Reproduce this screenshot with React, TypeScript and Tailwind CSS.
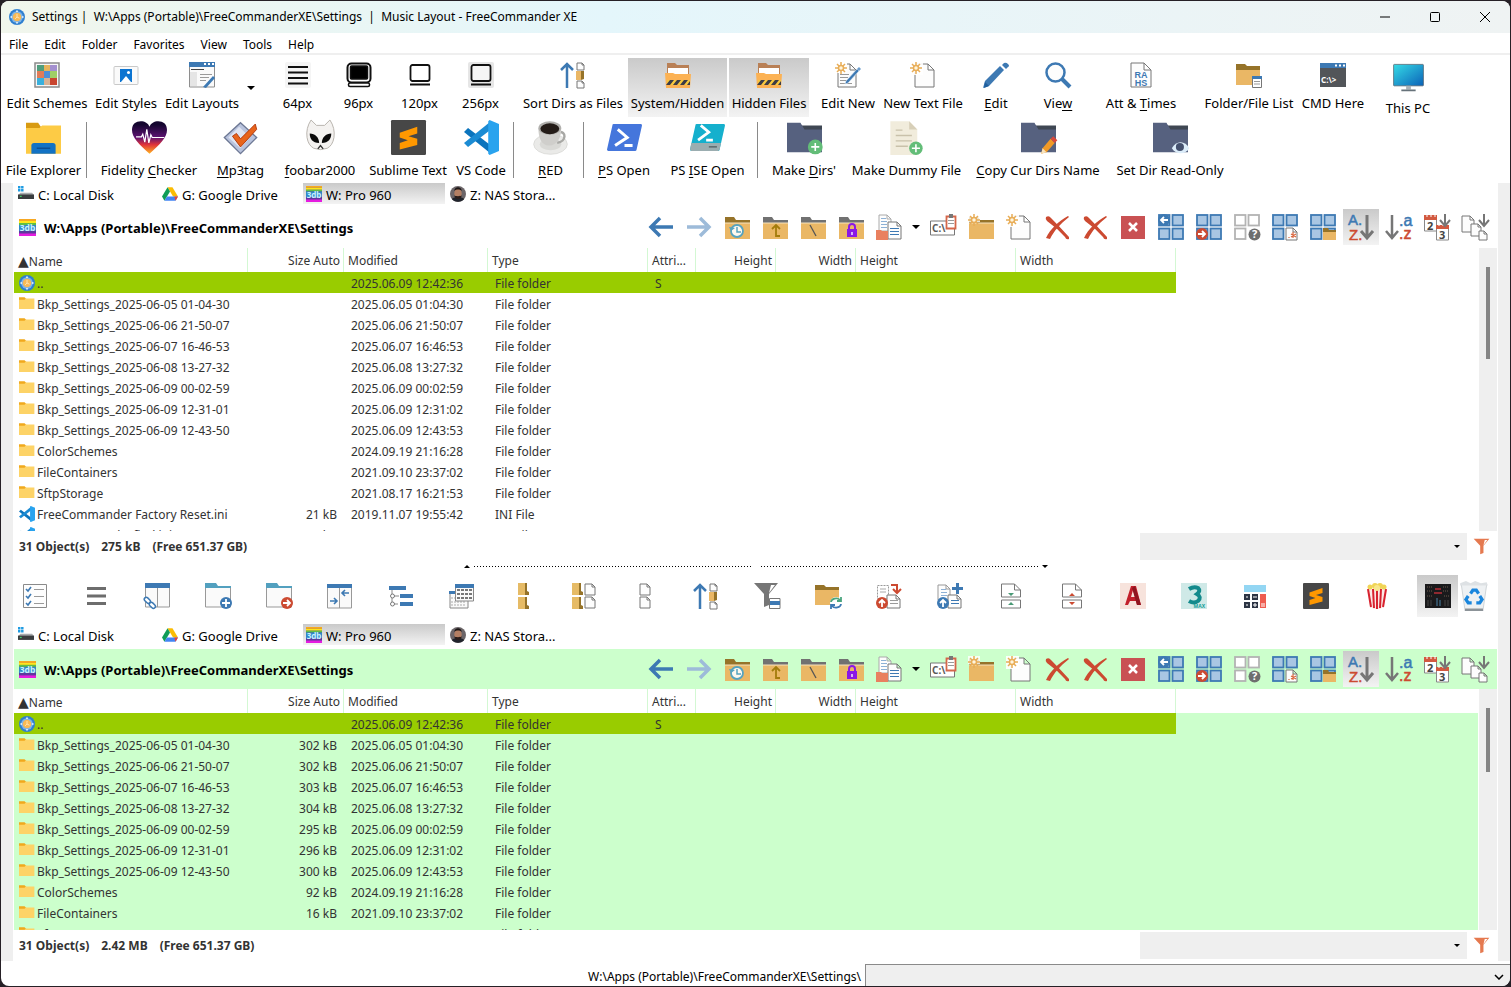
import { ReactNode } from "react";
import clsx from "clsx";

const BLUE = "#3d79b3";
const RED = "#cc4a31";
const GRAY = "#767676";
const SAND = "#eab765";
const BROWN = "#967329";

type BoxProps = { x: number; y: number; w: number; h: number; stroke?: string; fill?: string };

function Page({ x, y, w, h, stroke = GRAY, fill = "#fdfdfd" }: BoxProps) {
  const f = Math.round(w / 3);
  return (
    <path
      d={`M${x} ${y}h${w - f}l${f} ${f}v${h - f}h${-w}zM${x + w - f} ${y}v${f}h${f}`}
      fill={fill}
      stroke={stroke}
    />
  );
}

function Folder({ tab = BROWN, body = SAND }: { tab?: string; body?: string }) {
  return (
    <>
      <path d="M1 3h9l2 3h14v4H1z" fill={tab} />
      <path d="M1 8.500h25V25H1z" fill="#f6e3c0" />
      <path d="M1 9.500h25V25H1z" fill={body} />
    </>
  );
}

function Star({ x = 7, y = 7 }) {
  return (
    <g transform={`translate(${x} ${y})`} stroke="#e8ad57" strokeWidth="1.500">
      <path d="M0-6V-3M0 3V6M-6 0H-3M3 0H6M-4-4L-2-2M2 2L4 4M-4 4L-2 2M2-2L4-4" />
      <circle r="2.500" fill="#fff5dd" />
    </g>
  );
}

function Tiles({ s = BLUE, f = "#a9c6e3", skip = false }) {
  return (
    <g fill={f} stroke={s} strokeWidth="1.800">
      <rect x="1" y="1" width="10.500" height="10.500" />
      <rect x="14.500" y="1" width="10.500" height="10.500" />
      <rect x="1" y="14.500" width="10.500" height="10.500" />
      {!skip && <rect x="14.500" y="14.500" width="10.500" height="10.500" />}
    </g>
  );
}

function Badge({ x, y, color, d }: { x: number; y: number; color: string; d: string }) {
  return (
    <g transform={`translate(${x} ${y})`}>
      <circle r="6" fill={color} />
      <path d={d} stroke="#fff" strokeWidth="1.800" fill="none" />
    </g>
  );
}

const ARROW_R = "M-4 0H3M0-3L3 0L0 3";
const ARROW_L = "M4 0H-3M0-3L-3 0L0 3";
const ARROW_U = "M0 4V-3M-3 0L0-3L3 0";
const PLUS = "M-4 0H4M0-4V4";

function Sublime() {
  return (
    <>
      <rect width="26" height="26" rx="1" fill="#474747" />
      <path d="M6.500 9.500L19.500 5v5L13 12l6.500 2v4.500L6.500 22v-5l6-2-6-2z" fill="#ff9800" />
    </>
  );
}

function VSCode() {
  return (
    <>
      <path d="M0 9l3-3L20 19v6z" fill="#0b74bd" />
      <path d="M0 17l3 3L20 7V1z" fill="#1b8bd3" />
      <path d="M19 0l7 3v20l-7 3-1-1V1z" fill="#29a3ee" />
    </>
  );
}

function HazardFolder() {
  return (
    <>
      <path d="M2 1h8l2 2h12v9H2z" fill="#b98056" />
      <path d="M3 6h20v8H3z" fill="#fff" />
      <path d="M0 11h8l2 1h16l-1 14H1z" fill="#fcb254" />
      <path d="M2 18h23v5H2z" fill="#f7c83c" />
      <path d="M1 23l4-5h4l-4 5zM8 23l4-5h4l-4 5zM15 23l4-5h4l-4 5zM22 23l3-4v4z" fill="#3c3c46" />
    </>
  );
}

function Pencil() {
  return (
    <>
      <path d="M11 19L22 7l2 2-11 12-3 1z" fill={BLUE} stroke="#dceaf6" strokeWidth=".6" />
      <path d="M22 7l2-2 2 2-2 2z" fill="#6b9ccb" />
    </>
  );
}

function SortDirs() {
  return (
    <>
      <path d="M7 26V2M1 8L7 2l6 6" stroke={BLUE} strokeWidth="2.500" fill="none" />
      <Page x={17} y={1} w={7} h={7} />
      <path d="M16 9h5v9h-5z" fill={SAND} />
      <path d="M21 9h3v8l-3 1z" fill={BROWN} />
      <Page x={17} y={19} w={7} h={7} />
    </>
  );
}

function TealFolder() {
  return (
    <>
      <path d="M.5 4.500h25V24H.5z" fill="#fafafa" stroke="#999" />
      <path d="M0 0h11l2 3h13v2H0z" fill="#52a0bf" />
    </>
  );
}

function DarkFolder() {
  return (
    <>
      <path d="M9 4h17v6H9z" fill="#3f4753" />
      <path d="M0 2h10l3 5h13v17H0z" fill="#56617f" />
    </>
  );
}

function Funnel({ color = GRAY }) {
  return (
    <>
      <path d="M1 1h24L16 12v11l-5 2V12z" fill={color} />
      <path d="M18 3h4l-6 8z" fill="#fff" />
    </>
  );
}

function Marker() {
  return (
    <>
      <circle cx="13" cy="13" r="13" fill="#2f7fd0" />
      <circle cx="13" cy="13" r="9.500" fill="#7fb4e6" />
      <path d="M13 1l2 4h-4zM13 25l2-4h-4zM1 13l4-2v4zM25 13l-4-2v4z" fill="#d8ebfa" />
      <circle cx="13" cy="13" r="7" fill="#f9b955" />
      <path d="M13 8v5l-3 3M13 13l4 2" stroke="#ffe5b5" strokeWidth="1.500" fill="none" />
    </>
  );
}

function Rainbow() {
  return (
    <>
      <path d="M0 0h26v26H0z" fill="#5c3a9c" />
      <path d="M0 0h26v3H0z" fill="#f7a823" />
      <path d="M0 3h26v3H0z" fill="#fde71c" />
      <path d="M0 6h26v3H0z" fill="#5fbf45" />
      <path d="M0 9h26v9H0z" fill="#2f87c8" />
      <path d="M0 22h26v4H0z" fill="#e51ce0" />
      <text x="13" y="19" textAnchor="middle" fontSize="13" fontWeight="700" fill="#c9f1ff">
        3db
      </text>
    </>
  );
}

function Laptop({ fill = "none", bg }: { fill?: string; bg?: string }) {
  return (
    <>
      {bg && <rect width="26" height="26" rx="2" fill={bg} />}
      <rect x="3.500" y="3" width="19" height="16" rx="2" fill={fill} stroke="#111" strokeWidth="1.800" />
      <path d="M3 22.500h20" stroke="#111" strokeWidth="1.800" />
    </>
  );
}

const lines = (d: string, color = "#9a9a9a") => <path d={d} stroke={color} fill="none" />;

const icons: Record<string, ReactNode> = {
  schemes: (
    <>
      <rect x="1" y="1" width="24" height="24" fill="#f5f5f5" stroke="#8b8b8b" strokeWidth="1.500" />
      <path d="M3 3h7v6H3z" fill="#4f9e7d" />
      <path d="M10 3h6v6h-6z" fill="#e6b35b" />
      <path d="M16 3h7v6h-7z" fill="#a38fcf" />
      <path d="M3 9h7v7H3z" fill="#e37c57" />
      <path d="M10 9h6v7h-6z" fill="#4f8fd6" />
      <path d="M16 9h7v7h-7z" fill="#9fcf66" />
      <path d="M3 16h7v7H3z" fill="#39b0dd" />
      <path d="M10 16h6v7h-6z" fill="#d9b294" />
      <path d="M16 16h7v7h-7z" fill="#c9452f" />
    </>
  ),
  styles: (
    <>
      <rect x="1" y="4.500" width="24" height="18" rx="1" fill="#fafafa" stroke="#c9c9c9" />
      <path d="M7 7h12v13H7z" fill="#0b74d1" />
      <path d="M8 20l5-6 5 6z" fill="#fff" />
      <circle cx="15.500" cy="10.500" r="1.500" fill="#fff" />
    </>
  ),
  layouts: (
    <>
      <path d="M.5 1h25v24H.5z" fill="#fafafa" stroke="#8e8e8e" />
      <path d="M0 0h26v5H0z" fill={BLUE} />
      <path d="M15 2h2M19 2h2M23 2h2" stroke="#fff" strokeWidth="2" />
      {lines("M2 7.500h13", "#444")}
      <path d="M1 10h7v14H1z" fill="#e5e5e5" />
      {lines("M11 12.500h12M11 15.500h9M11 18.500h6")}
      <path d="M14 25l10-11 2 2-9 10z" fill={BLUE} />
    </>
  ),
  px64: (
    <>
      <rect width="26" height="26" rx="2" fill="#f5f5f5" />
      <path d="M3 5h20M3 10.500h20M3 16h20M3 21.500h20" stroke="#111" strokeWidth="1.800" />
    </>
  ),
  px96: (
    <>
      <rect x="1.500" y="1.500" width="23" height="19" rx="4" fill="#fff" stroke="#111" strokeWidth="2" />
      <rect x="4.500" y="4" width="17" height="13" rx="1" stroke="#111" strokeWidth="1.500" />
      <rect x="2.500" y="21" width="21" height="3.500" rx="1.500" fill="#fff" stroke="#111" strokeWidth="1.500" />
    </>
  ),
  px120: <Laptop />,
  px256: <Laptop fill="#f5f5f5" bg="#e6e6e6" />,
  sortDirs: <SortDirs />,
  hazard: <HazardFolder />,
  editNew: (
    <>
      <Page x={3} y={2} w={18} h={23} />
      {lines("M5 12.500h9M5 15.500h8M5 18.500h7M5 21.500h12")}
      <path d="M0 0h12v11H0z" fill="#fff" />
      <Star x={6} y={6} />
      <Pencil />
    </>
  ),
  newFile: (
    <>
      <Page x={5} y={2} w={19} h={23} />
      <path d="M0 0h13v13H0z" fill="#fff" fillOpacity=".9" />
      <Star x={6} y={6} />
    </>
  ),
  edit: (
    <>
      <path d="M0 26l2-7L17 4l4 4L6 24z" fill={BLUE} />
      <path d="M2 20l4 4-5 2z" fill="#1f5f9e" />
      <path d="M19 3l2-2q2-1 4 1t0 3l-2 2z" fill={BLUE} />
    </>
  ),
  view: (
    <>
      <circle cx="10.500" cy="10.500" r="9" fill="#fdfdfd" stroke={BLUE} strokeWidth="2.500" />
      <path d="M17 17l8 8" stroke={BLUE} strokeWidth="4" />
    </>
  ),
  attrs: (
    <>
      <Page x={3} y={1} w={20} h={24} />
      <g fill={BLUE} fontSize="9" fontWeight="700" textAnchor="middle" fontFamily="Liberation Sans">
        <text x="13" y="16">RA</text>
        <text x="13" y="24">HS</text>
      </g>
    </>
  ),
  folderList: (
    <>
      <path d="M0 2h9l2 2h13v4H0z" fill={BROWN} />
      <path d="M0 8h24v15H0z" fill={SAND} />
      <path d="M16.500 15h9v10.500h-9z" fill="#fff" stroke="#777" />
      <path d="M16 14h10v3H16z" fill={BLUE} />
      {lines("M18 19.500h6M18 22h6")}
    </>
  ),
  cmd: (
    <>
      <path d="M0 2h26v23H0z" fill="#525559" />
      <path d="M0 1h26v5H0z" fill={BLUE} />
      <path d="M15 3.500h2M19 3.500h2M23 3.500h2" stroke="#fff" strokeWidth="2" />
      <text x="1" y="21" fontSize="8" fontWeight="700" fill="#fff">
        C:\&gt;
      </text>
    </>
  ),
  pc: (
    <>
      <defs>
        <linearGradient id="screen" x1="0" y1="0" x2="1" y2="1">
          <stop stopColor="#35dbe6" />
          <stop offset="1" stopColor="#0b62b8" />
        </linearGradient>
      </defs>
      <rect x=".5" y="2" width="25" height="18" rx=".6" fill="url(#screen)" stroke="#4a5a66" strokeWidth=".6" />
      <path d="M11 20h4v3h-4z" fill="#a9b2b8" />
      <path d="M7 23h12v1.500H7z" fill="#66727a" />
    </>
  ),
  explorer: (
    <>
      <path d="M0 2h9l2 3h4v6H0z" fill="#d89b12" />
      <path d="M0 6h10l2-2h14v21H0z" fill="#fdcb45" />
      <path d="M4 25v-6a2 2 0 012-2h14a2 2 0 012 2v6z" fill="#1272c4" />
      <path d="M8 21h10" stroke="#0c4f94" strokeWidth="1" />
    </>
  ),
  heart: (
    <>
      <defs>
        <linearGradient id="heat" x1="0" y1="0" x2="0" y2="1">
          <stop offset=".1" stopColor="#14062f" />
          <stop offset=".5" stopColor="#5e1373" />
          <stop offset=".72" stopColor="#e0333a" />
          <stop offset="1" stopColor="#ffb421" />
        </linearGradient>
      </defs>
      <path d="M13 25C5 18 0 13 0 7.500 0 3 3 1 6.500 1 9.500 1 12 2.500 13 5c1-2.500 3.500-4 6.500-4C23 1 26 3 26 7.500 26 13 21 18 13 25z" fill="url(#heat)" />
      <path d="M3 12.500h4l1-2 1.500 6L11 7l1.500 10 1.500-6 1 2h9" stroke="#fff" strokeWidth=".9" fill="none" />
    </>
  ),
  mp3tag: (
    <>
      <path d="M13 2l12 11-12 12L1 13z" fill="#b9c3dd" stroke="#6d7894" />
      <path d="M12 5l8 8-7 8-9-8z" fill="#dfe4f1" />
      <path d="M7 12l3-2 3 4L24 3l1 4-12 13z" fill="#e8641b" stroke="#b13a10" strokeWidth=".7" />
    </>
  ),
  foobar: (
    <>
      <path d="M6 0l4 4h6l4-4q4 6 3 13-1 6-5 8l-5 1-5-1q-4-2-5-8-1-7 3-13z" fill="#f4f2f0" stroke="#b5b0aa" strokeWidth=".7" />
      <path d="M5 10c4 0 7 3 7 7-5 0-7-3-7-7zM21 10c-4 0-7 3-7 7 5 0 7-3 7-7z" fill="#0a0a0a" />
      <path d="M11 21.500l2-2.500 2 2.500" stroke="#333" fill="none" />
    </>
  ),
  sublime: <Sublime />,
  vscode: <VSCode />,
  coffee: (
    <>
      <ellipse cx="13" cy="18" rx="12.500" ry="7.500" fill="#eaeae8" stroke="#d4d4d1" strokeWidth=".5" />
      <ellipse cx="13" cy="18" rx="8" ry="4.500" fill="#d9d9d6" />
      <path d="M19 9c6-1 6 7-1 8" stroke="#a8a8a5" strokeWidth="1.800" fill="none" />
      <path d="M4 6c0 7 2 13 8 13s9-6 9-13z" fill="#cfcecb" />
      <ellipse cx="12.500" cy="6" rx="8.500" ry="5" fill="#b1b0ad" />
      <ellipse cx="12.500" cy="6.500" rx="7" ry="4" fill="#241c18" />
    </>
  ),
  ps: (
    <>
      <path d="M5 3h20a1 1 0 011 1l-4 18a1 1 0 01-1 1H1a1 1 0 01-1-1L4 4a1 1 0 011-1z" fill="#4576dc" />
      <path d="M8 7l7 6-9 6M13 19h6" stroke="#fff" strokeWidth="2.200" fill="none" />
    </>
  ),
  ise: (
    <>
      <path d="M5 3h20a1 1 0 011 1l-4 18a1 1 0 01-1 1H1a1 1 0 01-1-1L4 4a1 1 0 011-1z" fill="#15b0cd" />
      <path d="M1 17h22l-1 5-1 1H1l-1-1z" fill="#9badb0" />
      <path d="M8 4l6 5-8 6M12 15h5" stroke="#fff" strokeWidth="2" fill="none" />
      <path d="M14 20h6" stroke="#4f5b5e" />
    </>
  ),
  makeDirs: (
    <>
      <DarkFolder />
      <circle cx="21" cy="20" r="5.500" fill="#63bd78" />
      <path d="M18 20h6M21 17v6" stroke="#fff" strokeWidth="1.200" />
    </>
  ),
  dummy: (
    <>
      <path d="M1 1h14l6 6v19H1z" fill="#f1ecdc" />
      <path d="M15 1l6 6h-6z" fill="#d7cfb8" />
      {lines("M5 7.500h5M5 11.500h12M5 15.500h12M5 19.500h9", "#c9c1aa")}
      <circle cx="20" cy="21" r="5" fill="#63bd78" />
      <path d="M17 21h6M20 18v6" stroke="#fff" strokeWidth="1.200" />
    </>
  ),
  copyDir: (
    <>
      <DarkFolder />
      <path d="M15 25l1-4 6-7 3 3-6 7z" fill="#f19a26" />
      <path d="M22 14l2-2 3 3-2 2z" fill="#d94a3c" />
      <path d="M15 25l1-4 3 3z" fill="#f7e3bd" />
    </>
  ),
  readOnly: (
    <>
      <DarkFolder />
      <path d="M14 21c3-6 10-6 13 0-3 5-10 5-13 0z" fill="#dcedfa" />
      <circle cx="20" cy="20" r="3" fill="#43506e" />
    </>
  ),
  back: <path d="M25 13H4M12 4L3 13l9 9" stroke={BLUE} strokeWidth="3.500" fill="none" />,
  forward: <path d="M1 13h21M14 4l9 9-9 9" stroke="#9dbbd9" strokeWidth="3.500" fill="none" />,
  history: (
    <>
      <Folder />
      <circle cx="13" cy="17" r="6" fill="#fdf8ee" stroke="#56a3bf" strokeWidth="1.800" />
      <path d="M13 13v5h4" stroke="#56a3bf" strokeWidth="1.500" fill="none" />
      <path d="M5 13l2 4 4-3z" fill="#56a3bf" />
    </>
  ),
  up: (
    <>
      <Folder tab="#717171" />
      <path d="M18 22h-4V12M10 15l4-4 4 4" stroke="#a37c0c" strokeWidth="1.800" fill="none" />
    </>
  ),
  root: (
    <>
      <Folder tab="#717171" />
      <path d="M10 11l6 11" stroke="#555" strokeWidth="1.300" />
    </>
  ),
  lock: (
    <>
      <Folder tab="#717171" />
      <path d="M11 16v-3a3 3 0 016 0v3" stroke="#8a17e6" strokeWidth="2" fill="none" />
      <path d="M9 15h10v8H9z" fill="#8a17e6" />
      <path d="M14 18v3" stroke="#fff" strokeWidth="1.300" />
    </>
  ),
  copyPages: (
    <>
      <Page x={3} y={1} w={12} h={16} stroke="#aaa" />
      {lines("M5 4.500h5M5 7.500h6M5 10.500h6M5 13.500h6", "#8db1d6")}
      <Page x={12} y={8} w={13} h={17} />
      {lines("M14 14.500h9M14 17.500h9M14 20.500h9", BLUE)}
      <path d="M0 16h5l1 1h6v9H0z" fill="#e9805f" />
    </>
  ),
  clipPath: (
    <>
      <path d="M.5 7h24v14H.5z" fill="#fff" stroke="#777" />
      <text x="2" y="18" fontSize="10" fontWeight="700" fill="#5a5a5a">
        C:\
      </text>
      <path d="M16.500 2.500h9v12h-9z" fill="#fff" stroke="#d5674a" strokeWidth="1.800" />
      <path d="M19 0h4v4h-4z" fill="#777" />
      {lines("M18 6.500h6M18 9.500h6")}
    </>
  ),
  newFolder: (
    <>
      <Folder />
      <path d="M0 0h12v8H0z" fill="#fff" fillOpacity=".8" />
      <Star x={6} y={6} />
    </>
  ),
  delete: (
    <>
      <path d="M2 3q3-2 5 1 9 9 18 19v2q-3 1-4-2Q13 14 3 7 1 5 2 3z" fill={RED} />
      <path d="M24 2l1 1C16 10 10 17 6 25l-4-1C6 15 15 7 24 2z" fill={RED} />
    </>
  ),
  close: (
    <>
      <path d="M1 2h24v23H1z" fill="#c95153" />
      <path d="M9 9l8 8M17 9l-8 8" stroke="#fff" strokeWidth="2.500" />
    </>
  ),
  tilesBack: (
    <>
      <Tiles />
      <Badge x={6} y={6} color={BLUE} d={ARROW_L} />
    </>
  ),
  tilesFwd: (
    <>
      <Tiles />
      <Badge x={6} y={20} color={RED} d={ARROW_R} />
    </>
  ),
  tilesAsk: (
    <>
      <Tiles s="#b3b3b3" f="#fff" skip />
      <circle cx="20.500" cy="20.500" r="6" fill="#6e6e6e" />
      <text x="20.500" y="24" fontSize="11" fontWeight="700" fill="#fff" textAnchor="middle">
        ?
      </text>
    </>
  ),
  tilesMask: (
    <>
      <Tiles skip />
      <Page x={14} y={14} w={11} h={12} />
      <path d="M17 24v-1M21 18v6M19 20l5 3M24 20l-5 3" stroke="#d9653d" strokeWidth="1.200" />
    </>
  ),
  tilesFolder: (
    <>
      <Tiles />
      <path d="M13 14h5l1 2h7v10H13z" fill={BROWN} />
      <path d="M13 18h13v8H13z" fill={SAND} />
    </>
  ),
  sortAZ: (
    <>
      <g fontSize="15" fontFamily="Liberation Sans" strokeWidth=".5">
        <text x="0" y="11" fill={BLUE} stroke={BLUE}>A.</text>
        <text x="1" y="26" fill={RED} stroke={RED}>Z.</text>
      </g>
      <path d="M19 1v22M13 17l6 7 6-7" stroke={GRAY} strokeWidth="3" fill="none" />
    </>
  ),
  sortExt: (
    <>
      <g fontSize="16" fontFamily="Liberation Sans" strokeWidth=".5">
        <text x="13" y="12" fill={BLUE} stroke={BLUE}>.a</text>
        <text x="13" y="25" fill={RED} stroke={RED}>.z</text>
      </g>
      <path d="M6 1v22M0 17l6 7 6-7" stroke={GRAY} strokeWidth="2.500" fill="none" />
    </>
  ),
  sortDate: (
    <>
      <path d="M.5 3h12v14H.5zM12.500 13h12v13h-12z" fill="#fff" stroke="#888" />
      <path d="M0 1h13v5H0zM12 11h13v4H12z" fill="#d2593f" />
      <path d="M3 0v3M7 0v3M11 0v3M15 9v3M19 9v3" stroke="#fff" />
      <text x="3" y="16" fontSize="11" fontWeight="700" fill="#444">2</text>
      <text x="15" y="25" fontSize="11" fontWeight="700" fill="#444">3</text>
      <path d="M21 0v10M16 6l5 6 5-6" stroke={GRAY} strokeWidth="2" fill="none" />
    </>
  ),
  sortSize: (
    <>
      <Page x={0} y={2} w={12} h={16} />
      <Page x={9} y={10} w={10} h={12} />
      <Page x={17} y={17} w={8} h={9} />
      <path d="M22 0v10M17 6l5 6 5-6" stroke={GRAY} strokeWidth="2" fill="none" />
    </>
  ),
  checklist: (
    <>
      <path d="M1.500 1.500h23v23h-23z" fill="#fdfdfd" stroke="#8a8a8a" />
      <path d="M4 6l2 2 3-4M4 13l2 2 3-4M4 20l2 2 3-4" stroke={BLUE} strokeWidth="1.600" fill="none" />
      {lines("M12 6.500h10M12 13.500h10M12 20.500h10")}
    </>
  ),
  burger: <path d="M4 5.500h19M4 13h19M4 20.500h19" stroke="#6d6d6d" strokeWidth="3" />,
  linkPane: (
    <>
      <path d="M1.500 3h24v21h-24zM13.500 3v21" fill="#fafafa" stroke="#999" />
      <path d="M1 0h25v5H1z" fill={BLUE} />
      <g fill="#fff" stroke={BLUE} strokeWidth="1.500">
        <rect x="0" y="15" width="7" height="4" rx="2" transform="rotate(45 3 17)" />
        <rect x="5" y="20" width="7" height="4" rx="2" transform="rotate(45 8 22)" />
      </g>
    </>
  ),
  addDir: (
    <>
      <TealFolder />
      <Badge x={21} y={20} color={BLUE} d={PLUS} />
    </>
  ),
  gotoDir: (
    <>
      <TealFolder />
      <Badge x={21} y={20} color={RED} d={ARROW_R} />
    </>
  ),
  swapPane: (
    <>
      <path d="M.5 3h24v22H.5zM12.500 3v22" fill="#fafafa" stroke="#999" />
      <path d="M0 1h25v4H0z" fill={BLUE} />
      <path d="M3 18h7M7 15l3 3-3 3M22 10h-6M18 7l-3 3 3 3" stroke={BLUE} strokeWidth="1.600" fill="none" />
    </>
  ),
  tree: (
    <>
      <path d="M4 5v16h6M4 13h7" stroke="#888" fill="none" />
      <path d="M1 3h17v4H1zM12 11h13v4H12zM12 19h13v4H12z" fill={BLUE} />
      <circle cx="4.500" cy="13" r="2" fill="#fff" stroke="#777" />
      <circle cx="4.500" cy="21" r="2" fill="#fff" stroke="#777" />
    </>
  ),
  grids: (
    <>
      <path d="M1 9.500h18V25H1z" fill="#fafafa" stroke="#888" />
      <path d="M0 8h8v3H0z" fill={BLUE} />
      <path d="M2 15h14M2 19h14M2 22h14" stroke="#aaa" strokeDasharray="2 1" />
      <path d="M6.500 3h18v15h-18z" fill="#fafafa" stroke="#888" />
      <path d="M6 1h19v4H6z" fill={BLUE} />
      <path d="M8 7h15M8 11h15M8 15h15" stroke="#777" strokeWidth="2" strokeDasharray="3 1" />
    </>
  ),
  dirs: (
    <>
      <path d="M8 0h7v12H8zM8 14h7v12H8z" fill="#e6bb66" />
      <path d="M15 0h2v8l2 1v3h-4zM15 14h2v8l2 1v3h-4z" fill={BROWN} />
    </>
  ),
  dirsFiles: (
    <>
      <path d="M1 0h7v12H1zM1 14h7v12H1z" fill="#e6bb66" />
      <path d="M8 0h2v8l2 1v3H8zM8 14h2v8l2 1v3H8z" fill={BROWN} />
      <Page x={14} y={1} w={10} h={11} />
      <Page x={14} y={14} w={10} h={11} />
    </>
  ),
  files: (
    <>
      <Page x={8} y={1} w={10} h={11} />
      <Page x={8} y={14} w={10} h={11} />
    </>
  ),
  filterCard: (
    <>
      <path d="M0 0h24l-9 11v11l-5 2V11z" fill={GRAY} />
      <path d="M17 2h4l-6 8z" fill="#fff" />
      <path d="M15.500 15.500h10.500v10h-10.500z" fill="#fff" stroke="#777" />
      <path d="M16 18h10v4H16z" fill={BLUE} />
    </>
  ),
  refreshDir: (
    <>
      <path d="M0 2h9l2 2h13v6H0z" fill={BROWN} />
      <path d="M0 7h24v15H0z" fill={SAND} />
      <circle cx="21" cy="20" r="6" fill="#fff" />
      <path d="M16 19a5 4 0 019-2M26 14v4h-4" stroke="#4aa57f" strokeWidth="1.800" fill="none" />
      <path d="M26 21a5 4 0 01-9 2M16 26v-4h4" stroke={BLUE} strokeWidth="1.800" fill="none" />
    </>
  ),
  replace: (
    <>
      <path d="M1.500 2.500h11v13h-11z" fill="#fff" stroke="#999" strokeDasharray="2 1" />
      <path d="M4 6h6M4 9h6" stroke="#aaa" />
      <Page x={11} y={12} w={13} h={13} />
      {lines("M14 17.500h8M14 20.500h8")}
      <path d="M15 2h6v7M17 6l4 4 4-4" stroke={RED} strokeWidth="2" fill="none" />
      <Badge x={6} y={20} color={RED} d={ARROW_U} />
    </>
  ),
  addFiles: (
    <>
      <Page x={1} y={2} w={12} h={15} stroke="#999" />
      {lines("M4 6.500h5M4 9.500h6M4 12.500h6", "#8db1d6")}
      <Page x={11} y={12} w={13} h={13} />
      {lines("M14 17.500h8M14 20.500h8", BLUE)}
      <path d="M15 5.500h11M20.500 0v11" stroke={BLUE} strokeWidth="3" />
      <Badge x={6} y={20} color={BLUE} d={ARROW_U} />
    </>
  ),
  splitIn: (
    <>
      <path d="M3.500 1h13l6 6v7h-19zM16.500 1v6h6M3.500 17h19v8h-19z" fill="#fff" stroke="#777" />
      <path d="M10 10h6l-3 3zM10 22h6l-3-3z" fill="#4a9a76" />
    </>
  ),
  splitOut: (
    <>
      <path d="M3.500 1h13l6 6v7h-19zM16.500 1v6h6M3.500 17h19v8h-19z" fill="#fff" stroke="#777" />
      <path d="M10 13h6l-3-3zM10 19h6l-3 3z" fill={RED} />
    </>
  ),
  autocad: (
    <>
      <path d="M0 0h26v26H0z" fill="#f7e3dc" />
      <path d="M5 22L11 3h5l5 19h-4l-1-4h-6l-2 4zM11 14h4l-2-7z" fill="#c21f2b" fillRule="evenodd" />
      <path d="M15 3l6 19h-4L12 5z" fill="#8f1520" />
    </>
  ),
  max: (
    <>
      <path d="M0 0h26v26H0z" fill="#cfe9e7" />
      <path d="M8 6q5-3 9-1 3 3-1 6 5 3 1 7-4 3-9 0" stroke="#138a8c" strokeWidth="4" fill="none" />
      <text x="24" y="25" fontSize="5" fontWeight="700" fill="#16a09a" textAnchor="end">MAX</text>
    </>
  ),
  calc: (
    <>
      <path d="M2 2h22v7H2z" fill="#93d6f3" />
      <path d="M2 11h6v6H2zM10 11h6v6h-6zM2 19h6v6H2zM10 19h6v6h-6z" fill="#2c3444" />
      <path d="M18 11h6v14h-6z" fill="#ee5c50" />
      <path d="M4 14h2M11 14h4M4 22h2M11 22h4M13 20v4M19 21h4M19 23h4" stroke="#fff" />
    </>
  ),
  popcorn: (
    <>
      <path d="M3 6h20l-3 18-4 2h-6l-4-2z" fill="#fbe9e6" />
      <path d="M4 6l3 18M9 6l1 19M13 6v20M17 6l-1 19M22 6l-3 18" stroke="#d8222f" strokeWidth="2" />
      <g fill="#f0d456">
        <circle cx="6" cy="4" r="2.500" />
        <circle cx="11" cy="3" r="3" />
        <circle cx="16" cy="3" r="3" />
        <circle cx="20" cy="4" r="2.500" />
        <circle cx="13" cy="5" r="3" fill="#f8e78d" />
      </g>
    </>
  ),
  mixer: (
    <>
      <path d="M0 1h26v24H0z" fill="#1a1a1c" />
      <path d="M2 4h6M2 8h6M18 4h6M18 8h6M2 13h5M19 13h5" stroke="#6d5a4c" strokeDasharray="1 1" />
      <path d="M10 6h6M9 10h8" stroke="#8f2930" strokeWidth="2" />
      <path d="M12 15v8M15 17v6" stroke="#4b83a8" />
      <path d="M3 17v6M6 17v6M20 17v6M23 17v6" stroke="#454545" />
    </>
  ),
  recycle: (
    <>
      <path d="M2 3h22l-3 21H5z" fill="#eef1f3" stroke="#c6ccd0" strokeWidth=".7" />
      <path d="M1 2l5-2 4 2 4-2 5 2 5-1 1 3H1z" fill="#dde1e4" />
      <path d="M5 24h16v2H5z" fill="#8c9398" />
      <path d="M10 11l2-3h3l2 3M18 13l2 3-2 3h-3M11 19H8l-2-3 2-3" stroke="#1a86dd" strokeWidth="2.800" fill="none" />
    </>
  ),
  local: (
    <>
      <path d="M0 0h4v4H0zM5 0h4v4H5zM0 5h4v4H0zM5 5h4v4H5z" fill="#1e9be2" />
      <path d="M4 11h19l3 4H0z" fill="#a9acae" />
      <path d="M0 14h26v7H0z" fill="#3a3d3f" />
      <path d="M3 17h3" stroke="#3fd06a" strokeWidth="2" />
    </>
  ),
  gdrive: (
    <>
      <path d="M9 2h8l9 15h-8z" fill="#fbbc04" />
      <path d="M9 2l4 7L4 24l-4-7z" fill="#0f9d58" />
      <path d="M8 17h18l-4 7H4z" fill="#4285f4" />
      <path d="M20 17h6l-4 7z" fill="#ea4335" />
    </>
  ),
  rainbow: <Rainbow />,
  avatar: (
    <>
      <circle cx="13" cy="13" r="13" fill="#6b6568" />
      <path d="M3 21c4-4 16-4 20 0-5 6-15 6-20 0z" fill="#20242c" />
      <ellipse cx="13" cy="12" rx="6" ry="8" fill="#b47f63" />
      <path d="M7 8c0-8 12-8 12 0-3-3-9-3-12 0z" fill="#1c1615" />
      <path d="M7 15c2 2 10 2 12 0 0 8-12 8-12 0z" fill="#2b1d19" />
    </>
  ),
  marker: <Marker />,
  folder: (
    <>
      <path d="M0 2h9l3 3v4H0z" fill="#f0a91d" />
      <path d="M0 6h9l2-2h14v17H0z" fill="#fdd367" />
    </>
  ),
  funnel: <Funnel color="#e5794f" />,
};

function Icon({ name, className = "size-[26px]" }: { name: string; className?: string }) {
  return (
    <svg viewBox="0 0 26 26" className={clsx("block shrink-0 overflow-visible", className)} aria-hidden="true">
      {icons[name]}
    </svg>
  );
}

// "_" goes before the letter that is the keyboard shortcut
function Caption({ text }: { text: string }) {
  const at = text.indexOf("_");
  if (at < 0) return <span>{text}</span>;
  return (
    <span>
      {text.slice(0, at)}
      <span className="underline underline-offset-2">{text[at + 1]}</span>
      {text.slice(at + 2)}
    </span>
  );
}

function Caret({ up = false, className = "h-1 w-2" }) {
  return (
    <svg viewBox="0 0 8 4" className={className} aria-hidden="true">
      <path d={up ? "M0 4h8L4 0z" : "M0 0h8L4 4z"} />
    </svg>
  );
}

const menus = ["File", "Edit", "Folder", "Favorites", "View", "Tools", "Help"];

const topTools = [
  { label: "Edit Schemes", icon: "schemes", box: "w-[86px]" },
  { label: "Edit Styles", icon: "styles", box: "w-[72px]" },
  { label: "Edit Layouts", icon: "layouts", box: "w-[80px]", menu: true },
  { label: "64px", icon: "px64", box: "w-[61px] ml-[7px]" },
  { label: "96px", icon: "px96", box: "w-[61px]" },
  { label: "120px", icon: "px120", box: "w-[61px]" },
  { label: "256px", icon: "px256", box: "w-[61px]" },
  { label: "Sort Dirs as Files", icon: "sortDirs", box: "w-[110px] ml-[7px]" },
  { label: "System/Hidden", icon: "hazard", box: "w-[99px]", on: true },
  { label: "Hidden Files", icon: "hazard", box: "w-[80px] ml-0.5", on: true },
  { label: "Edit New", icon: "editNew", box: "w-[62px] ml-2" },
  { label: "New Text File", icon: "newFile", box: "w-[88px]" },
  { label: "_Edit", icon: "edit", box: "w-[58px]" },
  { label: "Vie_w", icon: "view", box: "w-[66px]" },
  { label: "Att & _Times", icon: "attrs", box: "w-[100px]" },
  { label: "Folder/File List", icon: "folderList", box: "w-[92px] ml-3" },
  { label: "CMD Here", icon: "cmd", box: "w-[76px]" },
  { label: "This PC", icon: "pc", box: "w-[74px]", size: "size-[31px]" },
];

const appTools = [
  { label: "File Explorer", icon: "explorer", box: "w-[79px]", sep: true },
  { label: "Fidelity _Checker", icon: "heart", box: "w-[104px] ml-[7px]" },
  { label: "_Mp3tag", icon: "mp3tag", box: "w-[79px]" },
  { label: "_foobar2000", icon: "foobar", box: "w-[80px]" },
  { label: "Sublime Text", icon: "sublime", box: "w-[80px] ml-2" },
  { label: "VS Code", icon: "vscode", box: "w-[58px] ml-1", sep: true },
  { label: "_RED", icon: "coffee", box: "w-[59px] ml-1", sep: true },
  { label: "_PS Open", icon: "ps", box: "w-[66px] ml-1" },
  { label: "PS _ISE Open", icon: "ise", box: "w-[93px] ml-1", sep: true },
  { label: "Make _Dirs'", icon: "makeDirs", box: "w-[78px] ml-1" },
  { label: "Make Dummy File", icon: "dummy", box: "w-[119px] ml-1" },
  { label: "_Copy Cur Dirs Name", icon: "copyDir", box: "w-[136px] ml-1" },
  { label: "Set Dir Read-Only", icon: "readOnly", box: "w-[120px] ml-1" },
];

const drives = [
  { name: "C: Local Disk", icon: "local" },
  { name: "G: Google Drive", icon: "gdrive" },
  { name: "W: Pro 960", icon: "rainbow", active: true },
  { name: "Z: NAS Stora...", icon: "avatar" },
];

const pathTools = [
  "back", "forward", "history", "up", "root", "lock", "copyPages", "caret", "clipPath", "newFolder", "newFile",
  "delete", "delete", "close", "tilesBack", "tilesFwd", "tilesAsk", "tilesMask", "tilesFolder", "sortAZ",
  "sortExt", "sortDate", "sortSize",
];

const midTools = [
  "checklist", "burger", "linkPane", "addDir", "gotoDir", "swapPane", "tree", "grids", "dirs", "dirsFiles",
  "files", "sortDirs", "filterCard", "refreshDir", "replace", "addFiles", "splitIn", "splitOut", "autocad",
  "max", "calc", "sublime", "popcorn",
];

const columns = [
  { title: "Name", width: "w-[234px]", sorted: true },
  { title: "Size Auto", width: "w-[96px]", right: true },
  { title: "Modified", width: "w-[144px]" },
  { title: "Type", width: "w-[160px]" },
  { title: "Attri...", width: "w-[48px]" },
  { title: "Height", width: "w-[80px]", right: true },
  { title: "Width", width: "w-[80px]", right: true },
  { title: "Height", width: "w-[160px]" },
  { title: "Width", width: "w-[160px]" },
];

type Row = { name: string; size?: string; date: string; ini?: boolean };

const rows: Row[] = [
  { name: "..", date: "2025.06.09 12:42:36" },
  { name: "Bkp_Settings_2025-06-05 01-04-30", size: "302 kB", date: "2025.06.05 01:04:30" },
  { name: "Bkp_Settings_2025-06-06 21-50-07", size: "302 kB", date: "2025.06.06 21:50:07" },
  { name: "Bkp_Settings_2025-06-07 16-46-53", size: "303 kB", date: "2025.06.07 16:46:53" },
  { name: "Bkp_Settings_2025-06-08 13-27-32", size: "304 kB", date: "2025.06.08 13:27:32" },
  { name: "Bkp_Settings_2025-06-09 00-02-59", size: "295 kB", date: "2025.06.09 00:02:59" },
  { name: "Bkp_Settings_2025-06-09 12-31-01", size: "296 kB", date: "2025.06.09 12:31:02" },
  { name: "Bkp_Settings_2025-06-09 12-43-50", size: "300 kB", date: "2025.06.09 12:43:53" },
  { name: "ColorSchemes", size: "92 kB", date: "2024.09.19 21:16:28" },
  { name: "FileContainers", size: "16 kB", date: "2021.09.10 23:37:02" },
  { name: "SftpStorage", size: "136 Byte(s)", date: "2021.08.17 16:21:53" },
  { name: "FreeCommander Factory Reset.ini", size: "21 kB", date: "2019.11.07 19:55:42", ini: true },
  { name: "FreeCommander.find.ini", size: "1 kB", date: "2025.06.09 12:42:36", ini: true },
];

const PRESSED = "bg-linear-to-b from-[#cacaca] to-[#f3f3f3]";
const DOTS = "h-px w-[277px] bg-[repeating-linear-gradient(90deg,#000_0_1px,transparent_1px_3px)]";

function Separator() {
  return <div className="mx-[3px] h-14 w-px self-center bg-[#8a8a8a]" />;
}

function DriveBar() {
  return (
    <nav className="flex h-[21px] gap-0.5 pl-px">
      {drives.map((drive) => (
        <button
          key={drive.name}
          className={clsx("flex w-[142px] items-center gap-1 pl-[3px] whitespace-nowrap", drive.active && PRESSED)}>
          <Icon name={drive.icon} className="size-4" />
          <span className="pt-0.5">{drive.name}</span>
        </button>
      ))}
    </nav>
  );
}

function PathBar({ active }: { active: boolean }) {
  return (
    <div className={clsx("flex h-10 items-center justify-between pr-[3px] pl-[5px]", active && "bg-[#ccffcc]")}>
      <div className="flex items-center gap-2 font-bold whitespace-nowrap">
        <Icon name="rainbow" className="size-[17px]" />
        <span className="pt-px">W:\Apps (Portable)\FreeCommanderXE\Settings</span>
      </div>
      <div className="flex">
        {pathTools.map((tool, i) =>
          tool === "caret" ? (
            <button key={i} aria-label="more" className="flex w-4 items-center justify-center">
              <Caret />
            </button>
          ) : (
            <button
              key={i}
              aria-label={tool}
              className={clsx("mx-px flex size-9 items-center justify-center", tool === "sortAZ" && PRESSED)}>
              <Icon name={tool} />
            </button>
          )
        )}
      </div>
    </div>
  );
}

function FileTable({ active }: { active: boolean }) {
  const shown = active ? rows.slice(0, 11) : rows;

  return (
    <div className={clsx("min-w-0 flex-1 overflow-hidden", active ? "bg-[#ccffcc]" : "bg-white")}>
      <table className="w-full table-fixed border-separate border-spacing-0 text-[12px] whitespace-nowrap text-[#333]">
        <thead>
          <tr className="h-6 bg-white">
            {columns.map((col, i) => (
              <th
                key={i}
                className={clsx(
                  "border-r border-[#d3f8d3] px-1 pt-0.5 pb-0 font-normal",
                  col.width,
                  col.right ? "pr-[3px] text-right" : "text-left"
                )}>
                {col.sorted && <span className="font-['DejaVu_Sans'] text-[14px]">▲</span>}
                {col.title}
              </th>
            ))}
            <th className="p-0" />
          </tr>
        </thead>
        <tbody>
          {shown.map((row, i) => (
            <tr key={row.name} className={clsx("h-[21px]", i === 0 && "bg-[#99cc00]")}>
              <td className="p-0 pl-[5px]">
                <div className="flex h-[21px] items-center gap-0.5">
                  <Icon name={i === 0 ? "marker" : row.ini ? "vscode" : "folder"} className="size-4" />
                  <span className="pt-0.5">{row.name}</span>
                </div>
              </td>
              <td className="p-0 pt-0.5 pr-[7px] text-right">{active || row.ini ? row.size : ""}</td>
              <td className="p-0 pt-0.5 pl-[7px]">{row.date}</td>
              <td className="p-0 pt-0.5 pl-[7px]">{row.ini ? "INI File" : "File folder"}</td>
              <td className="p-0 pt-0.5 pl-[7px]">{i === 0 ? "S" : ""}</td>
              <td colSpan={4} className="p-0" />
              <td className={clsx("p-0", active ? "bg-[#ccffcc]" : "bg-white")} />
            </tr>
          ))}
        </tbody>
      </table>
    </div>
  );
}

function StatusBar({ size, label }: { size: string; label: string }) {
  return (
    <div className="flex h-[31px] items-center pr-[7px] pl-[5px]">
      <div className="flex flex-1 gap-3 pt-px text-[12px] font-bold text-[#333]">
        <span>31 Object(s)</span>
        <span>{size}</span>
        <span>(Free 651.37 GB)</span>
      </div>
      <div className="relative h-[27px] w-[327px]">
        <select aria-label={label} className="h-full w-full appearance-none bg-[#efefef]" />
        <svg viewBox="0 0 6 3" className="pointer-events-none absolute top-3 right-[7px] h-[3px] w-1.5">
          <path d="M0 0h6L3 3z" />
        </svg>
      </div>
      <button aria-label="Filter" className="ml-1.5">
        <Icon name="funnel" className="size-[17px]" />
      </button>
    </div>
  );
}

function Panel({ active = false, size, grow, thumb }: { active?: boolean; size: string; grow: string; thumb: string }) {
  return (
    <section className={clsx("flex min-h-0 flex-col", grow)}>
      <DriveBar />
      <div className={active ? "h-1" : "h-[3px]"} />
      <PathBar active={active} />
      <div className={clsx("flex min-h-0 flex-1", !active && "pt-px")}>
        <FileTable active={active} />
        <div className="ml-px w-[18px] bg-[#efefef] pt-[19px]">
          <div className={clsx("ml-[7px] w-1 bg-[#858585]", thumb)} />
        </div>
      </div>
      <StatusBar size={size} label={active ? "Bottom filter" : "Top filter"} />
    </section>
  );
}

const windowButtons = [
  { name: "Minimize", d: "M0 5h10" },
  { name: "Maximize", d: "M1.500.5h7a1 1 0 011 1v7a1 1 0 01-1 1h-7a1 1 0 01-1-1v-7a1 1 0 011-1z" },
  { name: "Close", d: "M0 0l10 10M10 0L0 10" },
];

export default function App() {
  return (
    <div className="h-screen bg-[#262026] p-px font-['Noto_Sans','Open_Sans',sans-serif] text-[13px] leading-4 text-black">
      <main className="flex h-full flex-col overflow-hidden rounded-lg bg-white">
        <header className="flex h-8 shrink-0 items-center bg-linear-to-r from-[#f1f6ec] via-[#e4f6fb] via-40% to-[#eff3f3] pl-2">
          <Icon name="marker" className="size-4" />
          <h1 className="ml-[7px] flex-1 text-[12px] whitespace-pre">
            {"Settings |  W:\\Apps (Portable)\\FreeCommanderXE\\Settings  |  Music Layout - FreeCommander XE"}
          </h1>
          <div className="flex">
            {windowButtons.map((btn) => (
              <button key={btn.name} aria-label={btn.name} className="flex h-8 w-[50px] items-center justify-center">
                <svg viewBox="0 0 10 10" className="size-2.5 overflow-visible" fill="none" stroke="#000">
                  <path d={btn.d} />
                </svg>
              </button>
            ))}
          </div>
        </header>

        <nav className="flex h-[22px] shrink-0 items-center gap-4 border-b-2 border-[#efefef] pt-[3px] pl-2 text-[12px]">
          {menus.map((menu) => (
            <button key={menu}>{menu}</button>
          ))}
        </nav>

        <div className="flex h-[63px] shrink-0 items-start pt-[3px] pl-[3px]">
          {topTools.map((tool) => (
            <div key={tool.label} className="flex">
              <button
                className={clsx(
                  "flex h-[59px] flex-col items-center gap-[7px] pt-1 whitespace-nowrap",
                  tool.box,
                  tool.on && PRESSED
                )}>
                <Icon name={tool.icon} className={tool.size} />
                <Caption text={tool.label} />
              </button>
              {tool.menu && (
                <button aria-label="Layouts menu" className="flex w-[18px] items-center justify-center">
                  <Caret />
                </button>
              )}
            </div>
          ))}
        </div>

        <div className="flex h-[65px] shrink-0 items-start pt-0.5 pl-[3px]">
          {appTools.map((tool) => (
            <div key={tool.label} className="flex">
              <button className={clsx("flex h-[60px] flex-col items-center gap-[7px] whitespace-nowrap", tool.box)}>
                <Icon name={tool.icon} className="size-[35px]" />
                <Caption text={tool.label} />
              </button>
              {tool.sep && <Separator />}
            </div>
          ))}
        </div>

        <div className="flex min-h-0 flex-1 border-x-[12px] border-[#efefef] px-px">
          <div className="flex min-w-0 flex-1 flex-col">
            <Panel grow="flex-[379]" size="275 kB" thumb="h-[92px]" />
            <div className="flex h-[9px] shrink-0 items-center justify-center gap-1">
              <Caret up className="h-[3px] w-1.5" />
              <div className={DOTS} />
              <div className={clsx("ml-1.5", DOTS)} />
              <Caret className="h-[3px] w-1.5" />
            </div>
            <div className="flex h-[53px] shrink-0 items-start gap-5 pt-1">
              {midTools.map((tool) => (
                <button key={tool} aria-label={tool} className="flex h-[42px] w-[41px] items-center justify-center">
                  <Icon name={tool} />
                </button>
              ))}
              <div className="flex">
                <button aria-label="mixer" className={clsx("flex h-[42px] w-[41px] items-center justify-center", PRESSED)}>
                  <Icon name="mixer" />
                </button>
                <button aria-label="recycle" className="flex h-[42px] w-8 items-center justify-center">
                  <Icon name="recycle" className="size-[30px]" />
                </button>
              </div>
            </div>
            <Panel active grow="flex-[337]" size="2.42 MB" thumb="h-16" />
          </div>
        </div>

        <footer className="mt-[3px] flex h-[22px] shrink-0 items-stretch text-[12px]">
          <label htmlFor="command" className="flex flex-4 items-center justify-end pt-[3px] pr-1 whitespace-nowrap">
            W:\Apps (Portable)\FreeCommanderXE\Settings\
          </label>
          <div className="relative flex-3">
            <select id="command" className="h-full w-full appearance-none border-t border-l border-[#8a8a8a] bg-[#efefef]" />
            <svg viewBox="0 0 10 6" className="pointer-events-none absolute top-2.5 right-1.5 h-1.5 w-2.5" fill="none" stroke="#000" strokeWidth="1.500">
              <path d="M1 1l4 4 4-4" />
            </svg>
          </div>
        </footer>
      </main>
    </div>
  );
}
